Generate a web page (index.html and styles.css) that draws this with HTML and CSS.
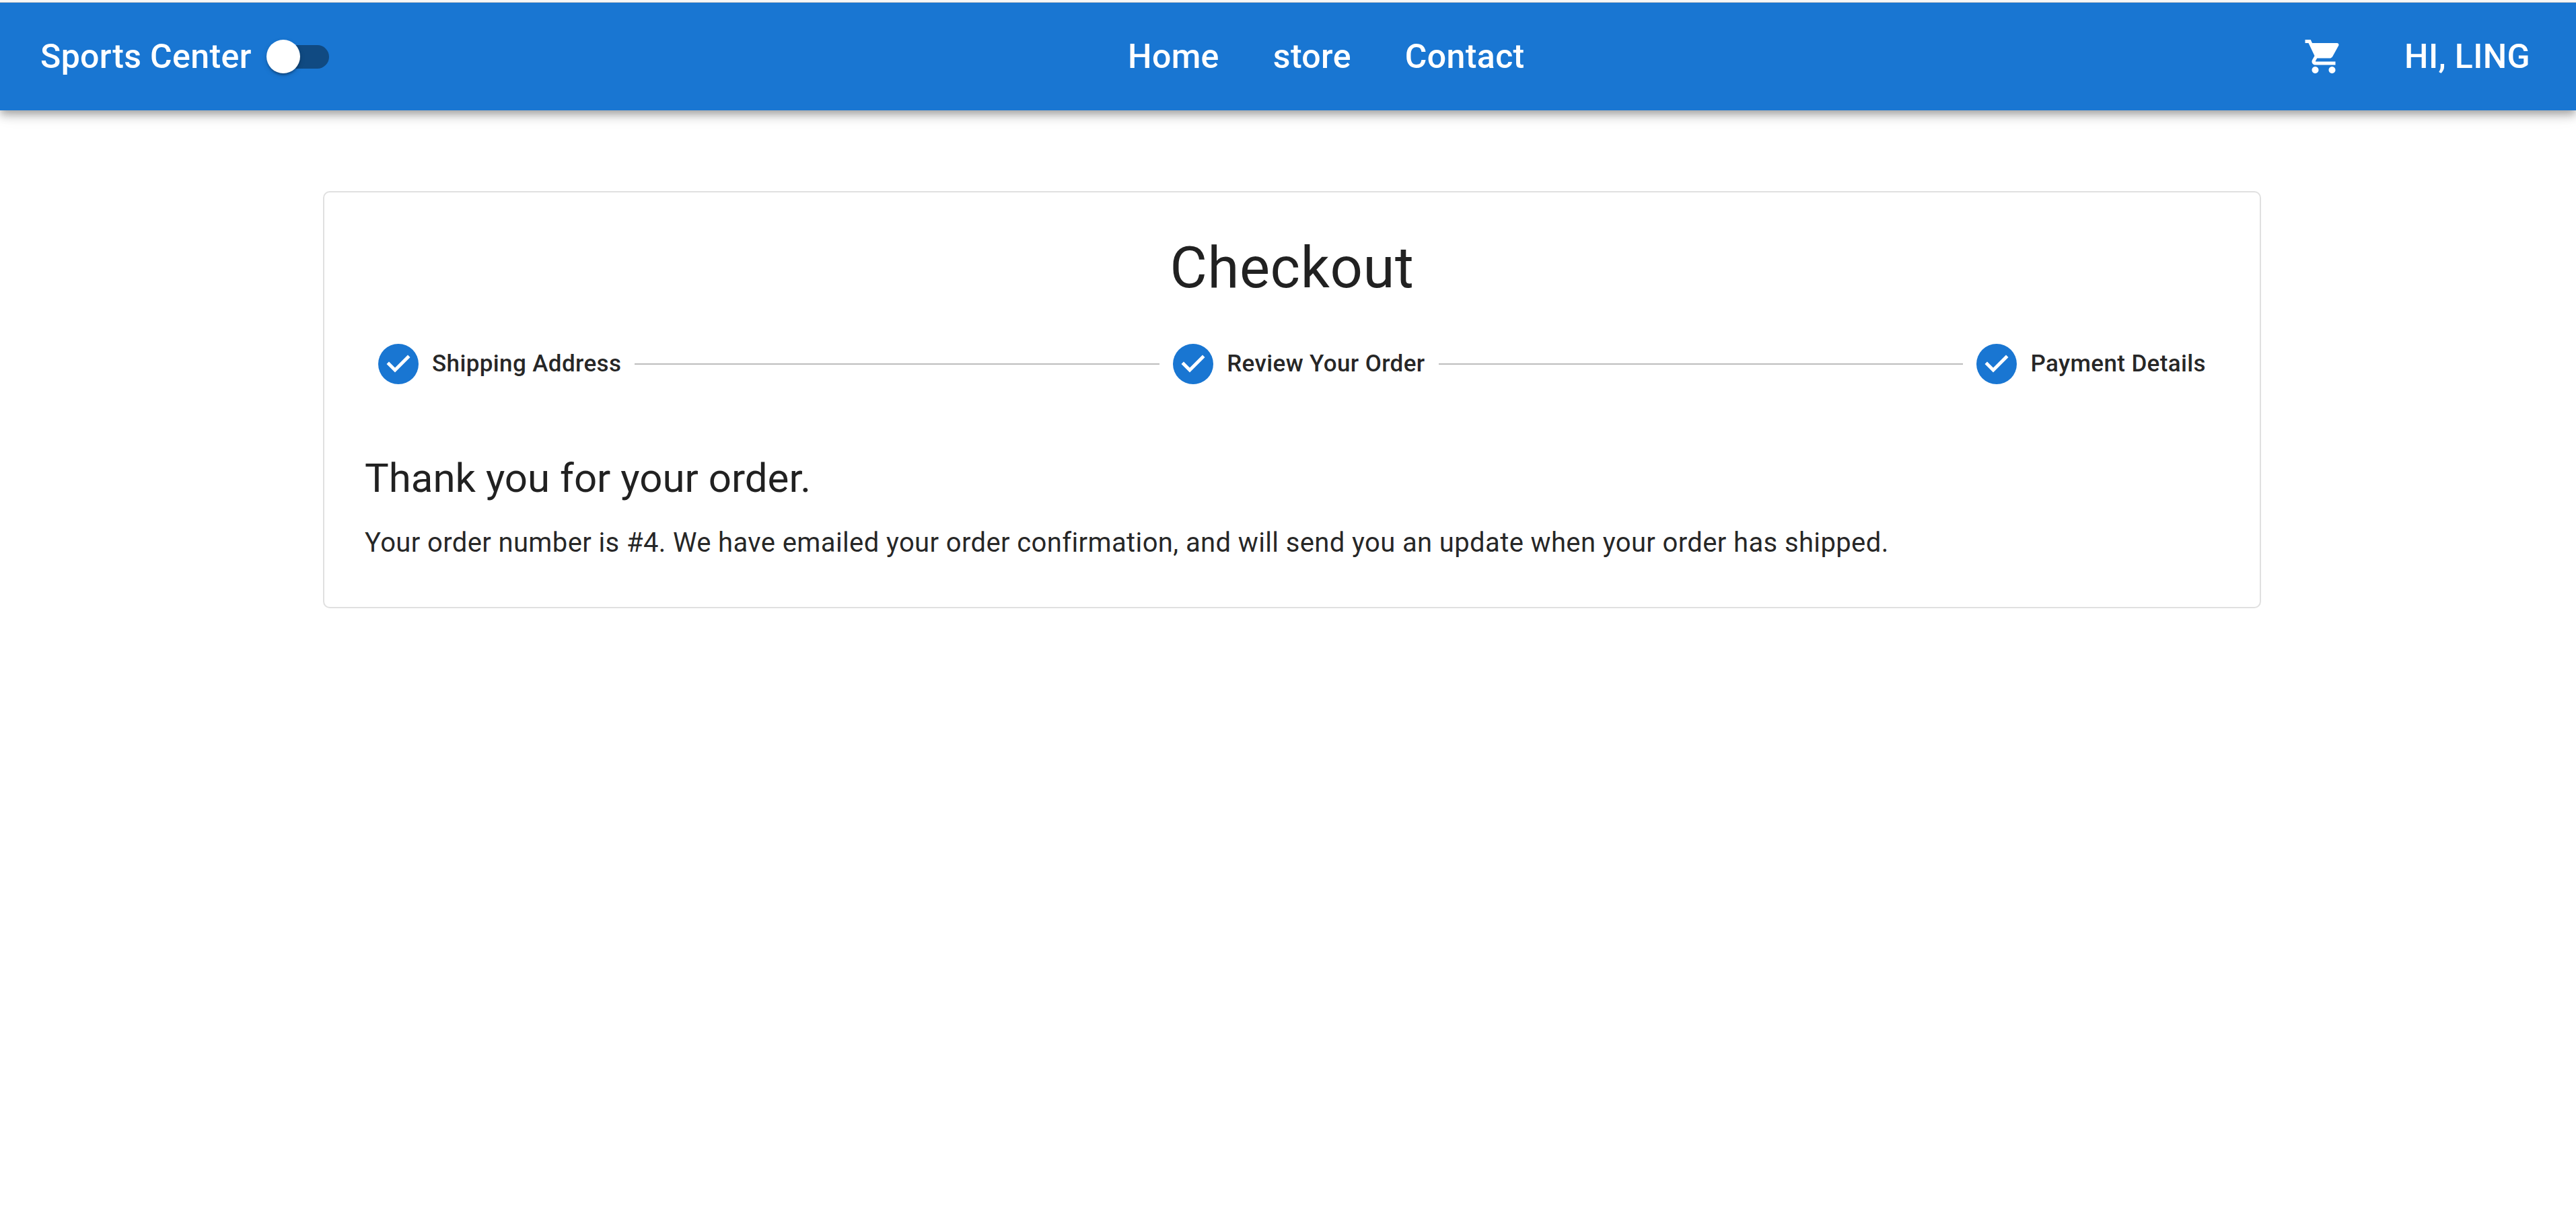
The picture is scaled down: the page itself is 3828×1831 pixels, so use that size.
FILE: index.html
```html
<!DOCTYPE html>
<html lang="en">
<head>
<meta charset="utf-8">
<title>Sports Center</title>
<link rel="stylesheet" href="styles.css">
</head>
<body>
<header class="app-bar">
  <div class="brand">
    <label for="theme-switch">Sports Center</label>
    <input class="switch" id="theme-switch" type="checkbox" role="switch">
  </div>
  <nav class="nav">
    <a href="#home">Home</a>
    <a href="#store">store</a>
    <a href="#contact">Contact</a>
  </nav>
  <div class="actions">
    <a class="cart" href="#basket" aria-label="Basket">
      <svg class="icon" viewBox="0 0 24 24" aria-hidden="true"><path d="M7 18c-1.100 0-1.990.9-1.990 2S5.900 22 7 22s2-.9 2-2-.9-2-2-2M1 2v2h2l3.600 7.590-1.350 2.450c-.16.28-.25.61-.25.960 0 1.100.9 2 2 2h12v-2H7.420c-.14 0-.25-.11-.25-.25l.03-.12.9-1.630h7.450c.75 0 1.410-.41 1.750-1.030l3.580-6.490c.08-.14.12-.31.12-.48 0-.55-.45-1-1-1H5.210l-.94-2zm16 16c-1.100 0-1.990.9-1.990 2s.89 2 1.990 2 2-.9 2-2-.9-2-2-2"/></svg>
    </a>
    <button class="user" type="button">HI, LING</button>
  </div>
</header>
<main class="page">
  <section class="card">
    <h1 class="title">Checkout</h1>
    <ol class="stepper">
      <li class="step">
        <svg class="icon done" viewBox="0 0 24 24" aria-hidden="true"><path d="M12 0a12 12 0 1 0 0 24 12 12 0 0 0 0-24zm-2 17l-5-5 1.400-1.400 3.600 3.600 7.600-7.600L19 8l-9 9z"/></svg>
        <span>Shipping Address</span>
      </li>
      <li class="connector" aria-hidden="true"></li>
      <li class="step">
        <svg class="icon done" viewBox="0 0 24 24" aria-hidden="true"><path d="M12 0a12 12 0 1 0 0 24 12 12 0 0 0 0-24zm-2 17l-5-5 1.400-1.400 3.600 3.600 7.600-7.600L19 8l-9 9z"/></svg>
        <span>Review Your Order</span>
      </li>
      <li class="connector" aria-hidden="true"></li>
      <li class="step">
        <svg class="icon done" viewBox="0 0 24 24" aria-hidden="true"><path d="M12 0a12 12 0 1 0 0 24 12 12 0 0 0 0-24zm-2 17l-5-5 1.400-1.400 3.600 3.600 7.600-7.600L19 8l-9 9z"/></svg>
        <span>Payment Details</span>
      </li>
    </ol>
    <h2 class="thanks">Thank you for your order.</h2>
    <p class="message">Your order number is #4. We have emailed your order confirmation, and will send you an update when your order has shipped.</p>
  </section>
</main>
</body>
</html>
```
FILE: styles.css
```css
* {
  box-sizing: border-box;
}

body {
  margin: 0;
  border-top: 3px solid #f7f7f7;
  background: #fff;
  color: rgba(0, 0, 0, 0.87);
  font-family: Roboto, "Liberation Sans", sans-serif;
  font-size: 40px;
  letter-spacing: 0.00938em;
}

h1, h2, p, ol {
  margin: 0;
  padding: 0;
  font-weight: 400;
}

.icon {
  display: block;
  flex: none;
  width: 60px;
  height: 60px;
  fill: currentColor;
}

/* App bar */
.app-bar {
  display: flex;
  align-items: center;
  justify-content: space-between;
  height: 161px;
  padding: 0 48px 0 60px;
  border-top: 1px solid #c4c7cb;
  background: #1976d2;
  color: #fff;
  font-size: 50px;
  font-weight: 500;
  line-height: 80px;
  box-shadow: 0 5px 10px -2px rgba(0, 0, 0, 0.2),
    0 10px 12px 0 rgba(0, 0, 0, 0.14),
    0 3px 25px 0 rgba(0, 0, 0, 0.12);
}

.brand,
.nav,
.actions {
  display: flex;
  align-items: center;
}

.switch {
  position: relative;
  appearance: none;
  width: 85px;
  height: 35px;
  margin: 0 30px;
  border-radius: 18px;
  background: #104a82;
}

.switch::before {
  content: "";
  position: absolute;
  top: -8px;
  left: -8px;
  width: 50px;
  height: 50px;
  border-radius: 50%;
  background: #fff;
  box-shadow: 0 5px 3px -3px rgba(0, 0, 0, 0.2),
    0 3px 3px 0 rgba(0, 0, 0, 0.14),
    0 3px 8px 0 rgba(0, 0, 0, 0.12);
}

.switch:checked::before {
  left: 43px;
}

.nav a {
  padding: 20px 40px;
  color: inherit;
  text-decoration: none;
}

.actions {
  gap: 70px;
}

.cart {
  padding: 30px 0;
  color: inherit;
}

.user {
  padding: 0 20px;
  border: 0;
  background: none;
  color: inherit;
  font: inherit;
  letter-spacing: inherit;
}

/* Checkout card */
.page {
  padding: 120px 0 120px 12px;
}

.card {
  max-width: 2880px;
  margin: 0 auto;
  padding: 60px;
  border: 2px solid #e0e0e0;
  border-radius: 10px;
}

.title {
  font-size: 85px;
  line-height: 105px;
  letter-spacing: 0.00735em;
  text-align: center;
}

.stepper {
  display: flex;
  align-items: center;
  padding: 60px 0 100px;
  list-style: none;
  font-size: 35px;
  font-weight: 500;
  line-height: 50px;
}

.step {
  display: flex;
  align-items: center;
  gap: 20px;
  padding: 0 20px;
}

.done {
  color: #1976d2;
}

.connector {
  flex: 1;
  height: 2px;
  background: #bdbdbd;
}

.thanks {
  margin-bottom: 21px;
  font-size: 60px;
  line-height: 80px;
  letter-spacing: 0;
}

.message {
  line-height: 70px;
}
```
